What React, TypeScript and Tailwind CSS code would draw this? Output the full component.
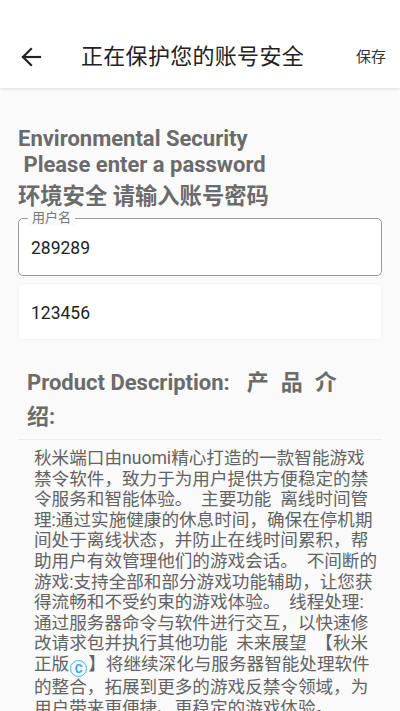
import React from "react"

// description text as laid out on the device, one entry per line
const lines: React.ReactNode[] = [
  "秋米端口由nuomi精心打造的一款智能游戏",
  "禁令软件，致力于为用户提供方便稳定的禁",
  "令服务和智能体验。  主要功能  离线时间管",
  "理:通过实施健康的休息时间，确保在停机期",
  "间处于离线状态，并防止在线时间累积，帮",
  "助用户有效管理他们的游戏会话。  不间断的",
  "游戏:支持全部和部分游戏功能辅助，让您获",
  "得流畅和不受约束的游戏体验。  线程处理:",
  "通过服务器命令与软件进行交互，以快速修",
  "改请求包并执行其他功能  未来展望  【秋米",
  <>
    正版
    <span className="inline-flex align-[-3px] mx-[1px] w-[17px] h-[17px] rounded-full border-[1.5px] border-[#42b4ec] bg-[#f2fbff] text-[#3aa8e2] text-[12px] leading-none font-bold items-center justify-center">
      C
    </span>
    】将继续深化与服务器智能处理软件
  </>,
  "的整合，拓展到更多的游戏反禁令领域，为",
  "用户带来更便捷、更稳定的游戏体验。",
]

export default function App() {
  return (
    <div
      className="w-[400px] h-[711px] overflow-hidden bg-[#fafafa]"
      style={{ fontFamily: 'Roboto, "Noto Sans CJK SC", sans-serif' }}
    >
      {/* top bar */}
      <div className="relative z-10 h-[88px] bg-white shadow-[0_1px_3px_rgba(0,0,0,0.12)] flex items-center pt-[26px]">
        <button className="ml-[20px] w-[22px] h-[22px] flex items-center justify-center">
          <svg width="22" height="22" viewBox="0 0 22 22" fill="none" stroke="#222" strokeWidth="2.2" strokeLinecap="square">
            <path d="M3 11h17" />
            <path d="M11 3l-8 8 8 8" />
          </svg>
        </button>
        <div className="ml-[39px] text-[22px] leading-[30px] text-[#222] tracking-[0.3px]">正在保护您的账号安全</div>
        <div className="ml-auto mr-[14px] text-[15px] leading-[30px] text-[#333]">保存</div>
      </div>

      {/* heading */}
      <div className="px-[18px] pt-[38px] text-[22px] leading-[26px] font-bold text-[#6b6b6b]">
        <div>Environmental Security</div>
        <div>&nbsp;Please enter a password</div>
        <div className="mt-[4px] leading-[28px] text-[22.3px]">环境安全 请输入账号密码</div>
      </div>

      {/* username field */}
      <div className="relative mx-[18px] mt-[8px] h-[58px] rounded-[5px] border border-[#9a9a9a] bg-white flex items-center">
        <span className="absolute -top-[9px] left-[9px] px-[4px] bg-[#fafafa] text-[13px] leading-[16px] text-[#777]">用户名</span>
        <span className="ml-[12px] mt-[2px] text-[17.5px] text-[#222]">289289</span>
      </div>

      {/* password field */}
      <div className="mx-[18px] mt-[7px] h-[57px] rounded-[5px] border border-[#f4f4f4] bg-white flex items-center">
        <span className="ml-[12px] mt-[3px] text-[17.5px] text-[#222]">123456</span>
      </div>

      {/* product description */}
      <div className="px-[27px] pt-[26px] text-[22px] leading-[34px] font-bold text-[#6b6b6b]">
        Product Description:<span className="ml-[17px] tracking-[12px]">产品介</span>
        <br />
        绍:
      </div>
      <div className="mx-[18px] mt-[5px] border-t border-[#ececec]" />
      <div className="pl-[34px] pt-[8px] text-[17.6px] leading-[20.6px] text-[#636363] whitespace-pre">
        {lines.map((l, i) => (
          <div key={i}>{l}</div>
        ))}
      </div>
    </div>
  )
}
